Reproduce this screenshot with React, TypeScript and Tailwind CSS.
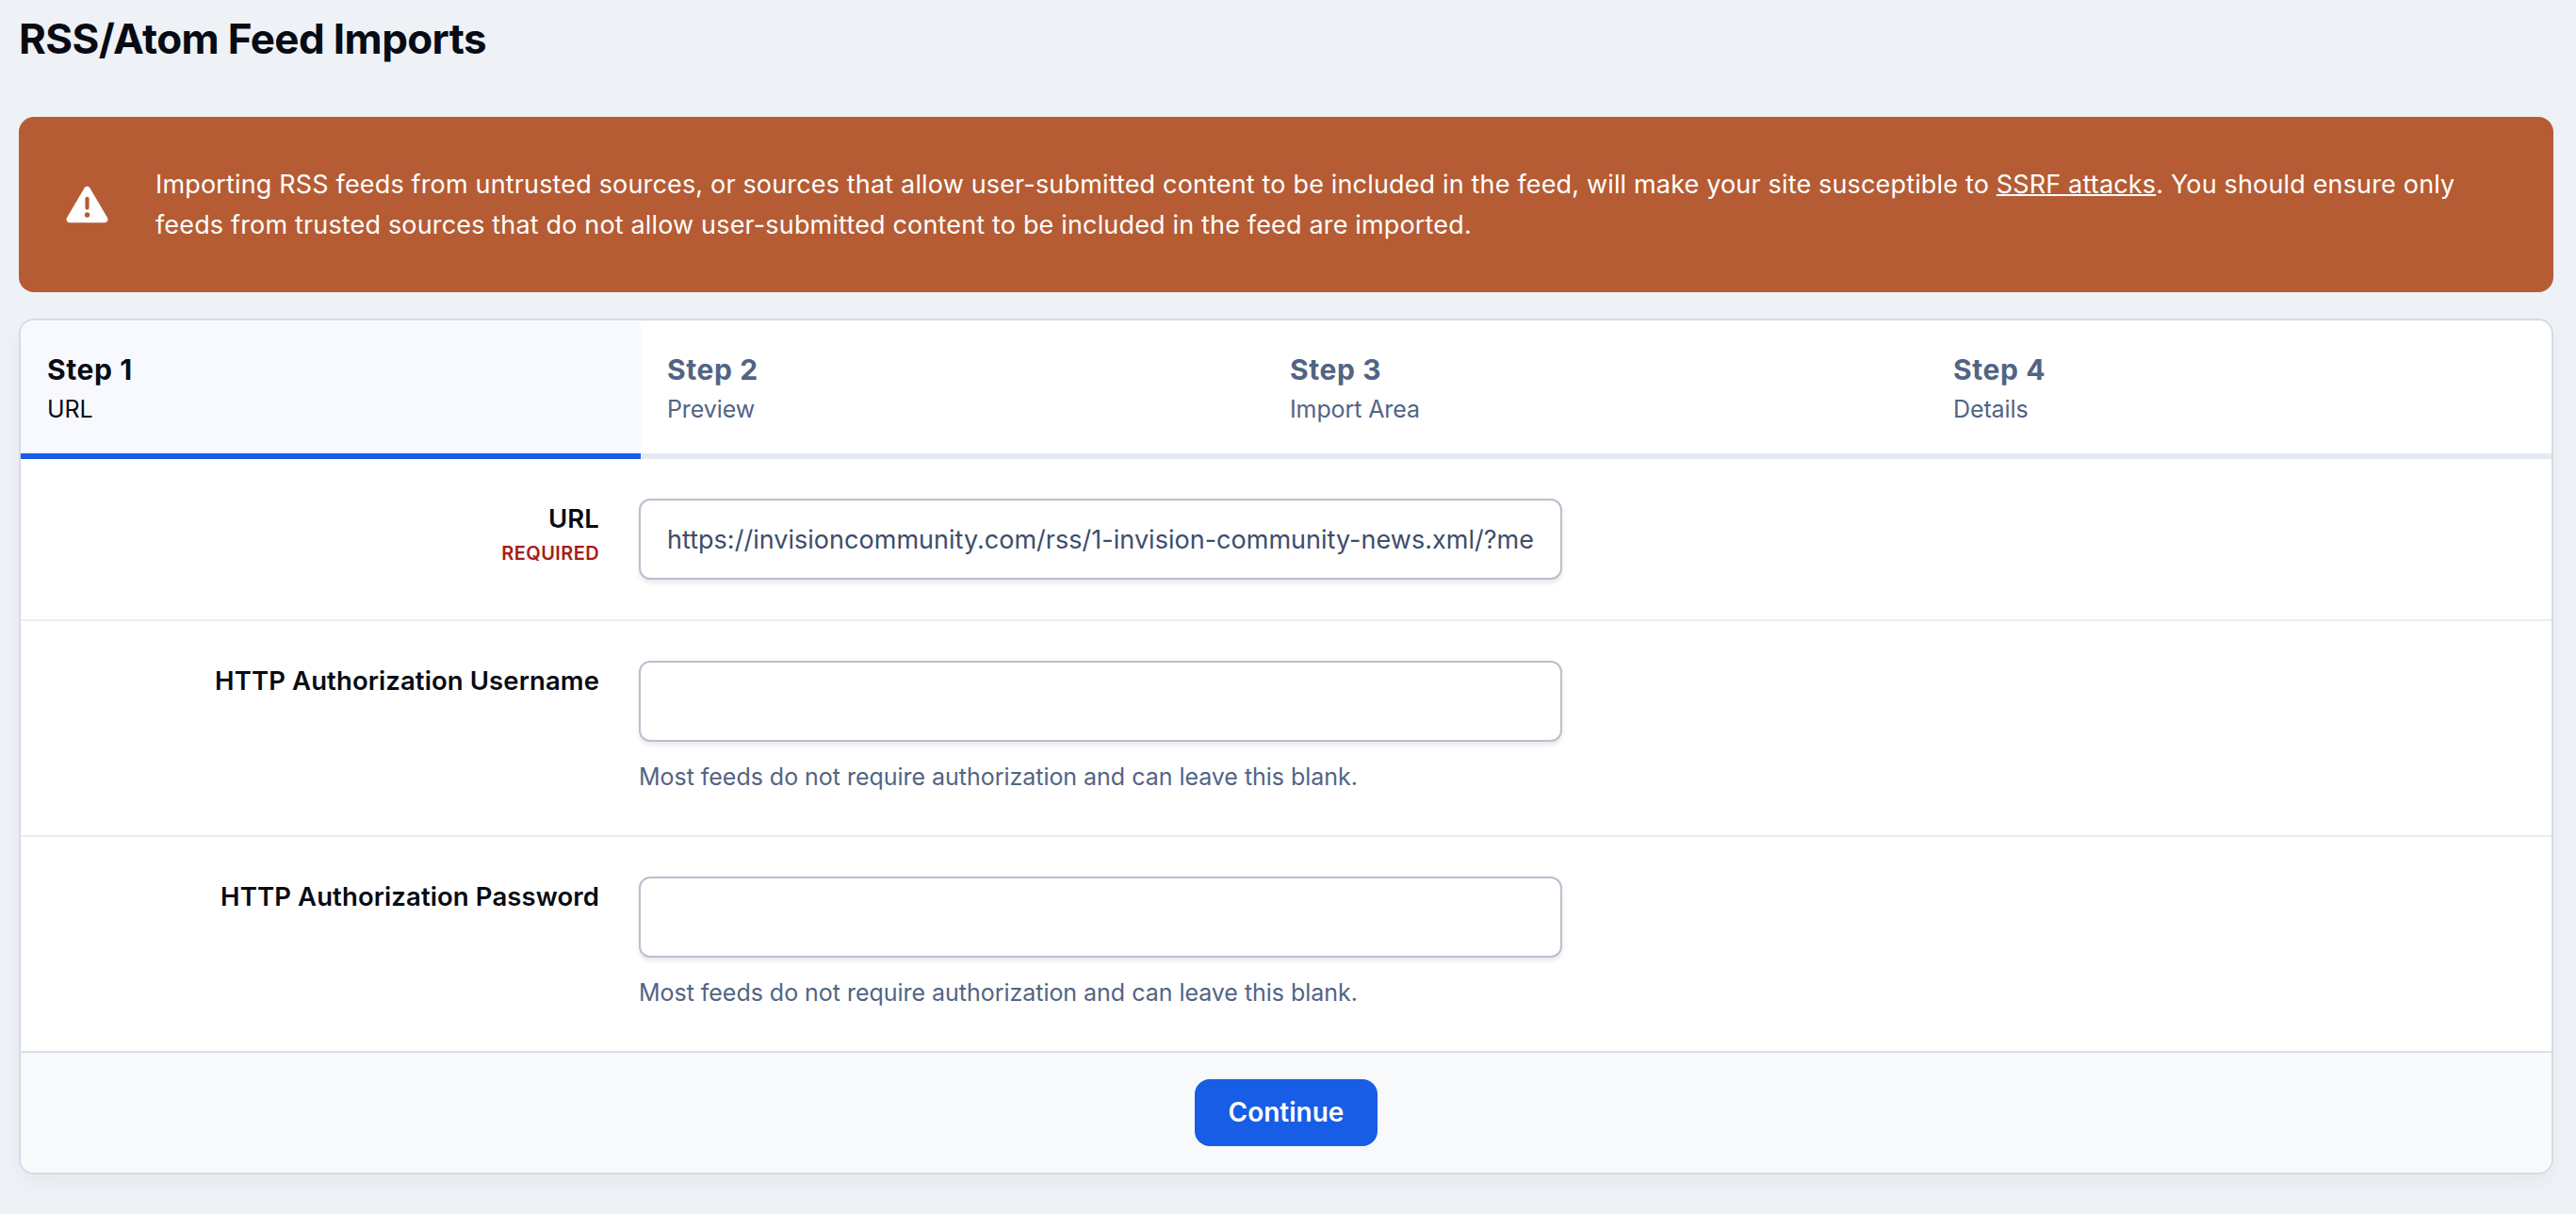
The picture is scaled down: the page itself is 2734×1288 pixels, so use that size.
import React from 'react';
import { FaTriangleExclamation } from 'react-icons/fa6';

interface FieldRowProps {
  label: string;
  value?: string;
  required?: boolean;
  help?: string;
}

const steps = [
  { title: 'Step 1', name: 'URL', active: true },
  { title: 'Step 2', name: 'Preview', active: false },
  { title: 'Step 3', name: 'Import Area', active: false },
  { title: 'Step 4', name: 'Details', active: false }
];

const FieldRow: React.FC<FieldRowProps> = ({ label, value = '', required, help }) => (
  <li className="flex gap-[42px] pt-[42px] border-b-2 border-[#ededee] last:border-b-0">
    <div className="w-[614px] text-right">
      <label className="block mt-[1px] text-[27.5px] leading-[40px] font-semibold tracking-[0.1px] text-[#080b14]">{label}</label>
      {required && (
        <span className="block mt-[2px] text-[20px] leading-[30px] font-semibold uppercase tracking-[0.4px] text-[#aa1a1a]">Required</span>
      )}
    </div>
    <div className="pb-[42px]">
      <input
        type="text"
        defaultValue={value}
        className="block w-[980px] h-[86px] px-[28px] rounded-[12px] border-2 border-[#b9bfcd] bg-white text-[27px] tracking-[0.02px] text-[#3d4d6b] shadow-[0_4px_4px_rgba(0,0,0,0.08)] outline-none"
      />
      {help && <p className="mt-[18px] h-[39px] text-[25px] leading-[39px] tracking-[-0.03px] text-[#526484]">{help}</p>}
    </div>
  </li>
);

const App: React.FC = () => {
  return (
    <div className="min-h-[1288px] bg-[#eef1f6] pl-[20px] pr-[24px] font-['Inter',sans-serif]">
      <h1 className="h-[124px] pt-[14px] text-[44px] leading-[54px] font-bold tracking-[-0.62px] text-[#080b14]">RSS/Atom Feed Imports</h1>

      <div className="flex items-center h-[186px] rounded-[16px] bg-[#b55c34] pl-[50px] text-white">
        <FaTriangleExclamation className="w-[45px] h-[44px] mb-[1px] shrink-0" />
        <p className="ml-[50px] w-[2460px] text-[27px] leading-[43px] tracking-[0.16px]">
          Importing RSS feeds from untrusted sources, or sources that allow user-submitted content to be included in the feed, will make your site susceptible to{' '}
          <a href="#" className="underline decoration-2">SSRF attacks</a>. You should ensure only feeds from trusted sources that do not allow user-submitted content to be included in the feed are imported.
        </p>
      </div>

      <form className="mt-[28px] h-[908px] rounded-[16px] border-2 border-[#d5dbe5] bg-white overflow-hidden shadow-[0_10px_20px_rgba(0,0,0,0.04)]">
        <ol className="grid grid-cols-[658px_661px_704px_1fr]">
          {steps.map(s => (
            <li
              key={s.title}
              className={`h-[147px] pl-[28px] pt-[31px] border-b-[6px] ${s.active ? 'bg-[#f7f9fe] border-[#185de5] text-[#080b14]' : 'border-[#e5eaf1] text-[#526484]'}`}
            >
              <strong className="block text-[30px] leading-[42px] font-bold tracking-[0.6px]">{s.title}</strong>
              <span className="block text-[25px] leading-[42px] tracking-[-0.1px]">{s.name}</span>
            </li>
          ))}
        </ol>

        <ul>
          <FieldRow label="URL" required value="https://invisioncommunity.com/rss/1-invision-community-news.xml/?me" />
          <FieldRow label="HTTP Authorization Username" help="Most feeds do not require authorization and can leave this blank." />
          <FieldRow label="HTTP Authorization Password" help="Most feeds do not require authorization and can leave this blank." />
        </ul>

        <div className="flex justify-center h-[129px] pt-[28px] border-t-2 border-[#d9dfeb] bg-[#f8f9fb]">
          <button type="button" className="w-[194px] h-[71px] pb-[1px] rounded-[16px] bg-[#185de5] text-[28px] font-semibold text-white">Continue</button>
        </div>
      </form>
    </div>
  );
};

export default App;
